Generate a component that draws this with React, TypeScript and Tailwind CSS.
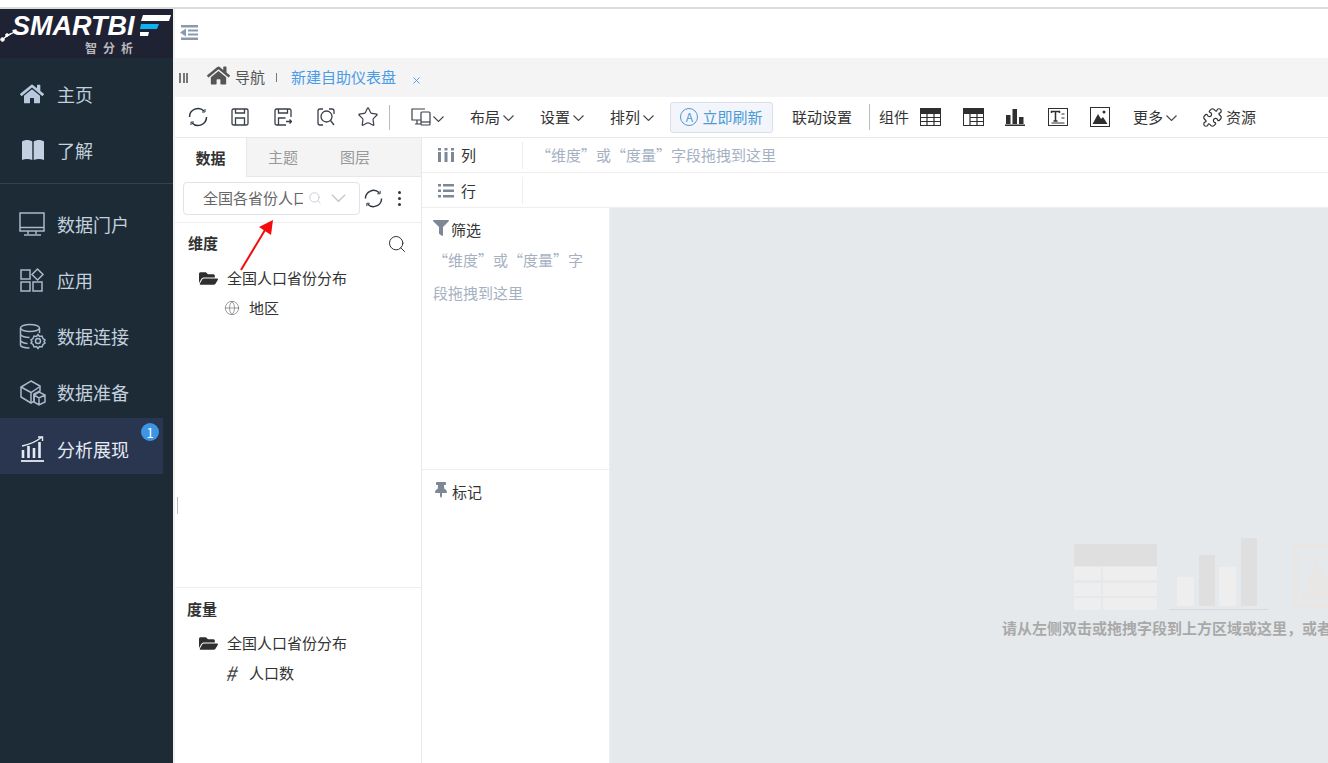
import React from "react";
import { Star, Puzzle, Globe, Search, X } from "lucide-react";
import { FaHome, FaFolderOpen, FaFilter, FaThumbtack } from "react-icons/fa";

const font = { fontFamily: '"Noto Sans CJK SC", "Liberation Sans", sans-serif' };

const Chev = ({ w = 11, color = "#444" }: { w?: number; color?: string }) => (
  <svg width={w} height={Math.round(w * 0.55)} viewBox="0 0 11 6" fill="none" stroke={color} strokeWidth="1.100">
    <path d="M.5.5l5 5 5-5" />
  </svg>
);
const Refresh = ({ size = 20 }: { size?: number }) => (
  <svg width={size} height={size} viewBox="0 0 20 20" fill="none" stroke="#2b3440" strokeWidth="1.500">
    <path d="M1.500 10a8.500 8.500 0 0 1 14.500-6" />
    <path d="M18.500 10a8.500 8.500 0 0 1-14.500 6" />
    <path d="M17 2v3h-3M3 18v-3h3" strokeWidth="1" />
  </svg>
);
const Save = () => (
  <svg width="18" height="18" viewBox="0 0 18 18" fill="none" stroke="#3a3f4a" strokeWidth="1.300">
    <rect x="1" y="1" width="16" height="16" rx="1.500" />
    <path d="M4.500 1v4h9V1M4.500 17v-7h9v7" />
  </svg>
);
const SaveAs = () => (
  <svg width="18" height="18" viewBox="0 0 18 18" fill="none" stroke="#3a3f4a" strokeWidth="1.300">
    <path d="M17 9V2.500A1.500 1.500 0 0 0 15.500 1h-13A1.500 1.500 0 0 0 1 2.500v13A1.500 1.500 0 0 0 2.500 17H12" />
    <path d="M4.500 1v4h9V1M4.500 17v-7h7M12 13.500h5.500M15.500 11.500l2 2-2 2" />
  </svg>
);
const Preview = () => (
  <svg width="18" height="18" viewBox="0 0 18 18" fill="none" stroke="#3a3f4a" strokeWidth="1.300">
    <path d="M6 1H3a2 2 0 0 0-2 2v12a2 2 0 0 0 2 2h3M12 1h3a2 2 0 0 1 2 2v3" />
    <circle cx="9.500" cy="8.500" r="5.500" />
    <path d="M13.500 12.500L17 17" />
  </svg>
);
const Device = () => (
  <svg width="20" height="18" viewBox="0 0 20 18" fill="none" stroke="#3a3f4a" strokeWidth="1.200">
    <path d="M14 1H1v11h9M4 16h6M6 12v4" />
    <rect x="10" y="4" width="9" height="13" rx="1" />
    <path d="M10 14h9" />
  </svg>
);
const TableA = () => (
  <svg width="21" height="18" viewBox="0 0 21 18">
    <rect x="0" y="0" width="21" height="18" fill="#2f2f2f" />
    <path d="M1 6h19v11H1z" fill="#fff" />
    <path d="M0 9.500h21M0 13.500h21M7 6v12M14 6v12" stroke="#2f2f2f" strokeWidth="1.200" />
  </svg>
);
const TableB = () => (
  <svg width="21" height="18" viewBox="0 0 21 18">
    <rect x="0" y="0" width="21" height="18" fill="#2f2f2f" />
    <path d="M1 6h19v11H1z" fill="#fff" />
    <path d="M7 9.500h14M7 13.500h14M7 6v12M14 6v12" stroke="#2f2f2f" strokeWidth="1.200" />
  </svg>
);
const Bars = () => (
  <svg width="20" height="18" viewBox="0 0 20 18" fill="#2f2f2f">
    <rect x="1" y="7" width="4.500" height="9" />
    <rect x="7.500" y="1" width="4.500" height="15" />
    <rect x="14" y="9" width="4.500" height="7" />
    <rect x="0" y="16.500" width="20" height="1.500" />
  </svg>
);
const TextBox = () => (
  <svg width="20" height="18" viewBox="0 0 20 18" fill="none" stroke="#2f2f2f">
    <rect x="0.500" y="0.500" width="19" height="17" />
    <path d="M3.500 5V3.500h8V5M7.500 3.500v9M5.500 13h4" strokeWidth="1.500" />
    <path d="M13.500 6h3M13.500 10h3M3.500 15h13" />
  </svg>
);
const ImageBox = () => (
  <svg width="20" height="20" viewBox="0 0 20 20">
    <rect x="0.500" y="0.500" width="19" height="19" fill="none" stroke="#2f2f2f" />
    <path d="M2.500 17L8 7l3 5 2-2 4.500 7z" fill="#2f2f2f" />
    <circle cx="14" cy="5" r="1.500" fill="#2f2f2f" />
  </svg>
);

const Ic = ({ children }: { children: React.ReactNode }) => (
  <svg width="30" height="28" viewBox="0 0 30 28" fill="none" stroke="#aab8cb" strokeWidth="1.500" className="ml-[-1px]">
    {children}
  </svg>
);

const sideItems: { label: string; icon: React.ReactNode }[] = [
  {
    label: "数据门户",
    icon: (
      <Ic>
        <rect x="2" y="3" width="24" height="18" />
        <path d="M2 17.500h24M10 21v3M18 21v3M6 25h17" />
      </Ic>
    ),
  },
  {
    label: "应用",
    icon: (
      <Ic>
        <rect x="3" y="4" width="9" height="9" />
        <rect x="3" y="16" width="9" height="9" />
        <rect x="15" y="16" width="9" height="9" />
        <path d="M19.500 3l5.500 5.500-5.500 5.500L14 8.500z" />
      </Ic>
    ),
  },
  {
    label: "数据连接",
    icon: (
      <Ic>
        <ellipse cx="12" cy="6" rx="9.500" ry="3.500" />
        <path d="M2.500 6v17c0 2 5 3 9 3M21.500 6v5M2.500 12c0 2 4 3.500 9 3.500M2.500 18c0 2 4 3.500 7 3.500" />
        <circle cx="20" cy="19" r="2.500" />
        <path d="M20 12.500l1.500 2 2.500-.5 1 2.500 2 1.500-1 1.500 1 1.500-2 1.500-1 2.500-2.500-.5-1.500 2-1.500-2-2.500.5-1-2.500-2-1.500 1-1.500-1-1.500 2-1.500 1-2.500 2.500.5z" />
      </Ic>
    ),
  },
  {
    label: "数据准备",
    icon: (
      <Ic>
        <path d="M13 3l9 5v5l-6 3v7l-3 2-10-6V9z" />
        <path d="M3 9l10 5.500 9-6M13 14.500V25" />
        <path d="M16 17l5-3 6 3v7l-6 3-5-3zM16 17l5 3 6-3M21 20v7" />
      </Ic>
    ),
  },
];

function SideRow({ icon, label, active }: { icon: React.ReactNode; label: string; active?: boolean }) {
  return (
    <div className={"relative flex h-[56px] w-[163px] items-center pl-[19px] text-[18px] " + (active ? "mt-[-2px] bg-[#2a3550] pt-[6px] text-[#e4ebf3]" : "text-[#c3d0de]")}>
      <div className="flex w-[38px] items-center">{icon}</div>
      <span>{label}</span>
      {active && (
        <span className="absolute left-[141px] top-[5px] flex h-[18px] w-[18px] items-center justify-center rounded-full bg-[#3d95e6] text-[13px] leading-none text-white">
          1
        </span>
      )}
    </div>
  );
}

const Menu = ({ label, w }: { label: string; w: string }) => (
  <div className={"flex items-center gap-[3px] text-[#333] " + w}>
    <span>{label}</span>
    <span className="mt-[2px] flex"><Chev /></span>
  </div>
);

const Hint = "“维度”或“度量”字段拖拽到这里";

export default function App() {
  return (
    <div style={font} className="relative h-[763px] w-[1328px] overflow-hidden bg-white text-[15px] text-[#333]">
      <div className="h-[9px] border-b-2 border-[#dcdcdc] bg-white" />
      <div className="flex h-[754px]">
        {/* Sidebar */}
        <aside className="flex w-[173px] shrink-0 flex-col bg-[#1c2b36]">
          <div className="relative flex h-[49px] shrink-0 flex-col bg-[#1f2233]">
            <div className="flex h-[32px] items-center pl-[12px] pt-[2px]">
              <span style={{ fontFamily: '"Liberation Sans", sans-serif' }} className="text-[27px] font-bold italic leading-[30px] text-white">
                SMARTBI
              </span>
              <svg width="33" height="24" viewBox="0 0 33 24" className="ml-[4px]">
                <path d="M4 1h28l-2 6H2z" fill="#fff" />
                <path d="M2 10h18l-2 5H1z" fill="#0db2f5" />
                <path d="M1 18h9l-1 4H1z" fill="#fff" />
              </svg>
            </div>
            <span className="ml-[85px] text-[12px] font-bold leading-[14px] tracking-[6px] text-[#b9b9be]">智分析</span>
            <svg width="16" height="12" viewBox="0 0 16 12" className="absolute left-0 top-[21px]" fill="#fff" stroke="#fff">
              <path d="M2 10L7 5l8-3" strokeWidth="1" />
              <circle cx="2.500" cy="9.500" r="1.800" />
              <circle cx="7" cy="5" r="1.300" />
            </svg>
          </div>
          <div className="flex h-[126px] shrink-0 flex-col border-b border-[#33424e] pt-[8px]">
            <SideRow label="主页" icon={<FaHome size={24} color="#b9c9dd" className="ml-[1px]" />} />
            <SideRow
              label="了解"
              icon={
                <svg width="24" height="22" viewBox="0 0 24 22" fill="#c2d0e2" className="ml-[2px]">
                  <path d="M1 2.500C4 .5 8 .5 11.300 2.500V21C8 19.500 4 19.500 1 21z" />
                  <path d="M23 2.500C20 .5 16 .5 12.700 2.500V21C16 19.500 20 19.500 23 21z" />
                </svg>
              }
            />
          </div>
          <div className="flex flex-col pt-[12px]">
            {sideItems.map((s) => (
              <SideRow key={s.label} label={s.label} icon={s.icon} />
            ))}
            <SideRow
              active
              label="分析展现"
              icon={
                <svg width="28" height="28" viewBox="0 0 28 28" fill="none" stroke="#e4ebf3" strokeWidth="1.400">
                  <path d="M2 26h23" strokeWidth="1.800" />
                  <path d="M4 23v-8M9.500 23V11M15 23V13M20.500 23V7" strokeWidth="2.600" />
                  <path d="M3 11Q14 9 23 2M19 2h4.500v4" />
                </svg>
              }
            />
          </div>
        </aside>

        {/* Main */}
        <main className="flex min-w-0 flex-1 flex-col border-l-2 border-[#f0f0f0]">
          <div className="flex h-[49px] shrink-0 items-center pl-[5px]">
            <svg width="18" height="17" viewBox="0 0 18 17" fill="#8a99ad" className="mt-[-2px]">
              <rect x="1" y="1" width="17" height="2.500" />
              <rect x="8" y="5.500" width="10" height="2" />
              <rect x="8" y="9.500" width="10" height="2" />
              <rect x="1" y="13.500" width="17" height="2.500" />
              <path d="M0 8.500l6-4v8z" />
            </svg>
          </div>
          <div className="flex h-[39px] shrink-0 items-center bg-[#f4f4f4] pl-[4px]">
            <div className="flex h-[10px] w-[9px] justify-between">
              <span className="w-[2px] bg-[#777]" />
              <span className="w-[2px] bg-[#777]" />
              <span className="w-[2px] bg-[#777]" />
            </div>
            <FaHome size={23} color="#555" className="ml-[19px] mt-[-5px]" />
            <span className="ml-[5px] text-[#555]">导航</span>
            <span className="ml-[11px] h-[9px] w-px bg-[#777]" />
            <span className="ml-[14px] text-[#4a9be8]">新建自助仪表盘</span>
            <X size={11} color="#4a9be8" strokeWidth={2} className="ml-[15px] mt-[5px]" />
          </div>

          {/* Toolbar */}
          <div className="flex h-[41px] shrink-0 items-center border-b border-[#e8e8e8] pl-[13px]">
            <div className="flex w-[218px] items-center">
              <span className="flex w-[42px]"><Refresh /></span>
              <span className="ml-[1px] flex w-[43px]"><Save /></span>
              <span className="flex w-[43px]"><SaveAs /></span>
              <span className="flex w-[40px]"><Preview /></span>
              <Star size={22} strokeWidth={1.300} color="#3a3f4a" />
              <span className="ml-[10px] h-[25px] w-px bg-[#bbb]" />
            </div>
            <div className="ml-[5px] flex w-[59px] items-center gap-[2px]">
              <Device />
              <span className="mt-[4px] flex"><Chev /></span>
            </div>
            <Menu label="布局" w="w-[70px]" />
            <Menu label="设置" w="w-[70px]" />
            <Menu label="排列" w="w-[60px]" />
            <div className="flex h-[31px] w-[103px] items-center justify-center rounded-[3px] border border-[#d7e0ec] bg-[#f3f5fa] text-[#4a9bd6]">
              <span className="mr-[4px] flex h-[18px] w-[18px] items-center justify-center rounded-full border border-[#4a9bd6] text-[12px] leading-none">A</span>
              立即刷新
            </div>
            <span className="ml-[19px] w-[60px] whitespace-nowrap">联动设置</span>
            <span className="ml-[17px] h-[26px] w-px bg-[#bbb]" />
            <span className="ml-[9px] w-[41px]">组件</span>
            <span className="flex w-[43px]"><TableA /></span>
            <span className="flex w-[42px]"><TableB /></span>
            <span className="flex w-[43px]"><Bars /></span>
            <span className="flex w-[42px]"><TextBox /></span>
            <span className="flex w-[43px]"><ImageBox /></span>
            <Menu label="更多" w="w-[69px]" />
            <Puzzle size={21} strokeWidth={1.400} color="#333" />
            <span className="ml-[3px]">资源</span>
          </div>

          <div className="flex min-h-0 flex-1">
            {/* Data panel */}
            <section className="flex w-[247px] shrink-0 flex-col border-r border-[#e8e8e8]">
              <div className="flex h-[39px] shrink-0 border-b border-[#e8e8e8] bg-[#f4f4f4]">
                <div className="mb-[-1px] flex w-[72px] items-center justify-center border-r border-[#e8e8e8] bg-white pt-[1px] font-bold text-[#333]">数据</div>
                <div className="flex w-[72px] items-center justify-center pt-[1px] text-[#999]">主题</div>
                <div className="flex w-[72px] items-center justify-center pt-[1px] text-[#999]">图层</div>
              </div>
              <div className="flex h-[46px] shrink-0 items-start border-b border-[#eee] pl-[8px] pt-[5px]">
                <div className="flex h-[33px] w-[177px] items-center rounded-[4px] border border-[#dfe3ea] pb-[1px] pl-[19px]">
                  <span className="w-[100px] overflow-hidden whitespace-nowrap text-[#666]">全国各省份人口</span>
                  <Search size={14} color="#c5c9d0" strokeWidth={1.500} className="ml-[5px]" />
                  <span className="ml-[9px] flex"><Chev w={15} color="#c5c9d0" /></span>
                </div>
                <span className="ml-[4px] mt-[7px] flex"><Refresh size={19} /></span>
                <span className="ml-[15px] mt-[9px] flex flex-col gap-[3px]">
                  <span className="h-[3px] w-[3px] rounded-full bg-[#333]" />
                  <span className="h-[3px] w-[3px] rounded-full bg-[#333]" />
                  <span className="h-[3px] w-[3px] rounded-full bg-[#333]" />
                </span>
              </div>
              <div className="h-[365px] shrink-0 border-b border-[#eee]">
                <div className="flex h-[44px] items-center justify-between pb-[3px] pl-[13px] pr-[14px]">
                  <span className="font-bold">维度</span>
                  <Search size={20} color="#333" strokeWidth={1.200} />
                </div>
                <div className="flex h-[22px] items-center pl-[24px]">
                  <FaFolderOpen size={19} color="#2f2f2f" />
                  <span className="ml-[9px]">全国人口省份分布</span>
                </div>
                <div className="mt-[8px] flex h-[22px] items-center pl-[49px]">
                  <Globe size={16} color="#777" strokeWidth={1.100} />
                  <span className="ml-[9px]">地区</span>
                </div>
              </div>
              <div>
                <div className="flex h-[42px] items-center pl-[12px] font-bold">度量</div>
                <div className="mt-[2px] flex h-[22px] items-center pl-[24px]">
                  <FaFolderOpen size={19} color="#2f2f2f" />
                  <span className="ml-[9px]">全国人口省份分布</span>
                </div>
                <div className="mt-[8px] flex h-[22px] items-center pl-[50px]">
                  <span className="w-[24px] text-[20px] italic leading-none text-[#444]">#</span>
                  <span>人口数</span>
                </div>
              </div>
            </section>

            {/* Right */}
            <section className="flex min-w-0 flex-1 flex-col">
              <div className="flex h-[35px] shrink-0 items-center border-b border-[#eee] pl-[16px]">
                <div className="flex h-[27px] w-[85px] items-center border-r border-[#eee]">
                  <svg width="16" height="14" viewBox="0 0 16 14" fill="#7d8796">
                    <rect x="0" y="4" width="3" height="10" />
                    <rect x="6.500" y="4" width="3" height="10" />
                    <rect x="13" y="4" width="3" height="10" />
                    <rect x="0" y="0" width="3" height="2.500" />
                    <rect x="6.500" y="0" width="3" height="2.500" />
                    <rect x="13" y="0" width="3" height="2.500" />
                  </svg>
                  <span className="ml-[7px]">列</span>
                </div>
                <span className="ml-[13px] whitespace-nowrap text-[#a5b1c2]">{Hint}</span>
              </div>
              <div className="flex h-[35px] shrink-0 items-center border-b border-[#eee] pl-[16px]">
                <div className="flex h-[27px] w-[85px] items-center border-r border-[#eee] pt-[2px]">
                  <svg width="16" height="14" viewBox="0 0 16 14" fill="#7d8796">
                    <rect x="0" y="0" width="3" height="2.500" />
                    <rect x="5" y="0" width="11" height="2.500" />
                    <rect x="0" y="5.500" width="3" height="2.500" />
                    <rect x="5" y="5.500" width="11" height="2.500" />
                    <rect x="0" y="11" width="3" height="2.500" />
                    <rect x="5" y="11" width="11" height="2.500" />
                  </svg>
                  <span className="ml-[7px]">行</span>
                </div>
              </div>
              <div className="flex min-h-0 flex-1">
                <div className="flex w-[188px] shrink-0 flex-col border-r border-[#eee]">
                  <div className="h-[262px] shrink-0 border-b border-[#eee] pl-[11px] pt-[11px]">
                    <div className="flex h-[22px] items-center">
                      <FaFilter size={16} color="#7d8796" className="mt-[-4px]" />
                      <span className="ml-[2px]">筛选</span>
                    </div>
                    <p className="mt-[2px] w-[152px] leading-[33px] text-[#a5b1c2]">{Hint}</p>
                  </div>
                  <div className="flex h-[44px] items-center pl-[11px]">
                    <FaThumbtack size={16} color="#7d8796" className="mt-[-4px]" />
                    <span className="ml-[3px]">标记</span>
                  </div>
                </div>
                <div className="min-w-0 flex-1 overflow-hidden bg-[#e6e9ec] pl-[392px] pt-[329px]">
                  <svg width="330" height="73" viewBox="0 0 330 73" className="ml-[72px] block w-[330px] shrink-0">
                    <rect x="0" y="7" width="83" height="22" fill="#dfdfdf" />
                    {[30, 46, 61].map((y) => (
                      <g key={y} fill="#eeeeee">
                        <rect x="0" y={y} width="27" height="13" />
                        <rect x="29" y={y} width="54" height="13" />
                      </g>
                    ))}
                    <rect x="103" y="40" width="17" height="29" fill="#eeeeee" />
                    <rect x="125" y="18" width="16" height="51" fill="#dfdfdf" />
                    <rect x="145" y="30" width="17" height="39" fill="#eeeeee" />
                    <rect x="167" y="1" width="16" height="68" fill="#dfdfdf" />
                    <rect x="95" y="72" width="99" height="1" fill="#d5d8dc" />
                    <rect x="221.500" y="8.500" width="60" height="60" fill="none" stroke="#e9e6e4" strokeWidth="4" />
                    <path d="M227 63l15-40 25 40z" fill="#e9e6e6" />
                  </svg>
                  <div className="mt-[7px] w-[400px] whitespace-nowrap text-[15px] font-bold text-[#a9a9a9]">请从左侧双击或拖拽字段到上方区域或这里，或者</div>
                </div>
              </div>
            </section>
          </div>
        </main>
      </div>

      {/* Resize handle */}
      <span className="absolute left-[177px] top-[497px] h-[17px] w-px bg-[#bbb]" />
      {/* Red annotation arrow */}
      <svg width="50" height="60" viewBox="0 0 50 60" className="absolute left-[232px] top-[216px]">
        <path d="M9 54L33 14" stroke="#f40c0c" strokeWidth="2" />
        <path d="M41 4L27 11 39 19z" fill="#f40c0c" />
      </svg>
    </div>
  );
}
